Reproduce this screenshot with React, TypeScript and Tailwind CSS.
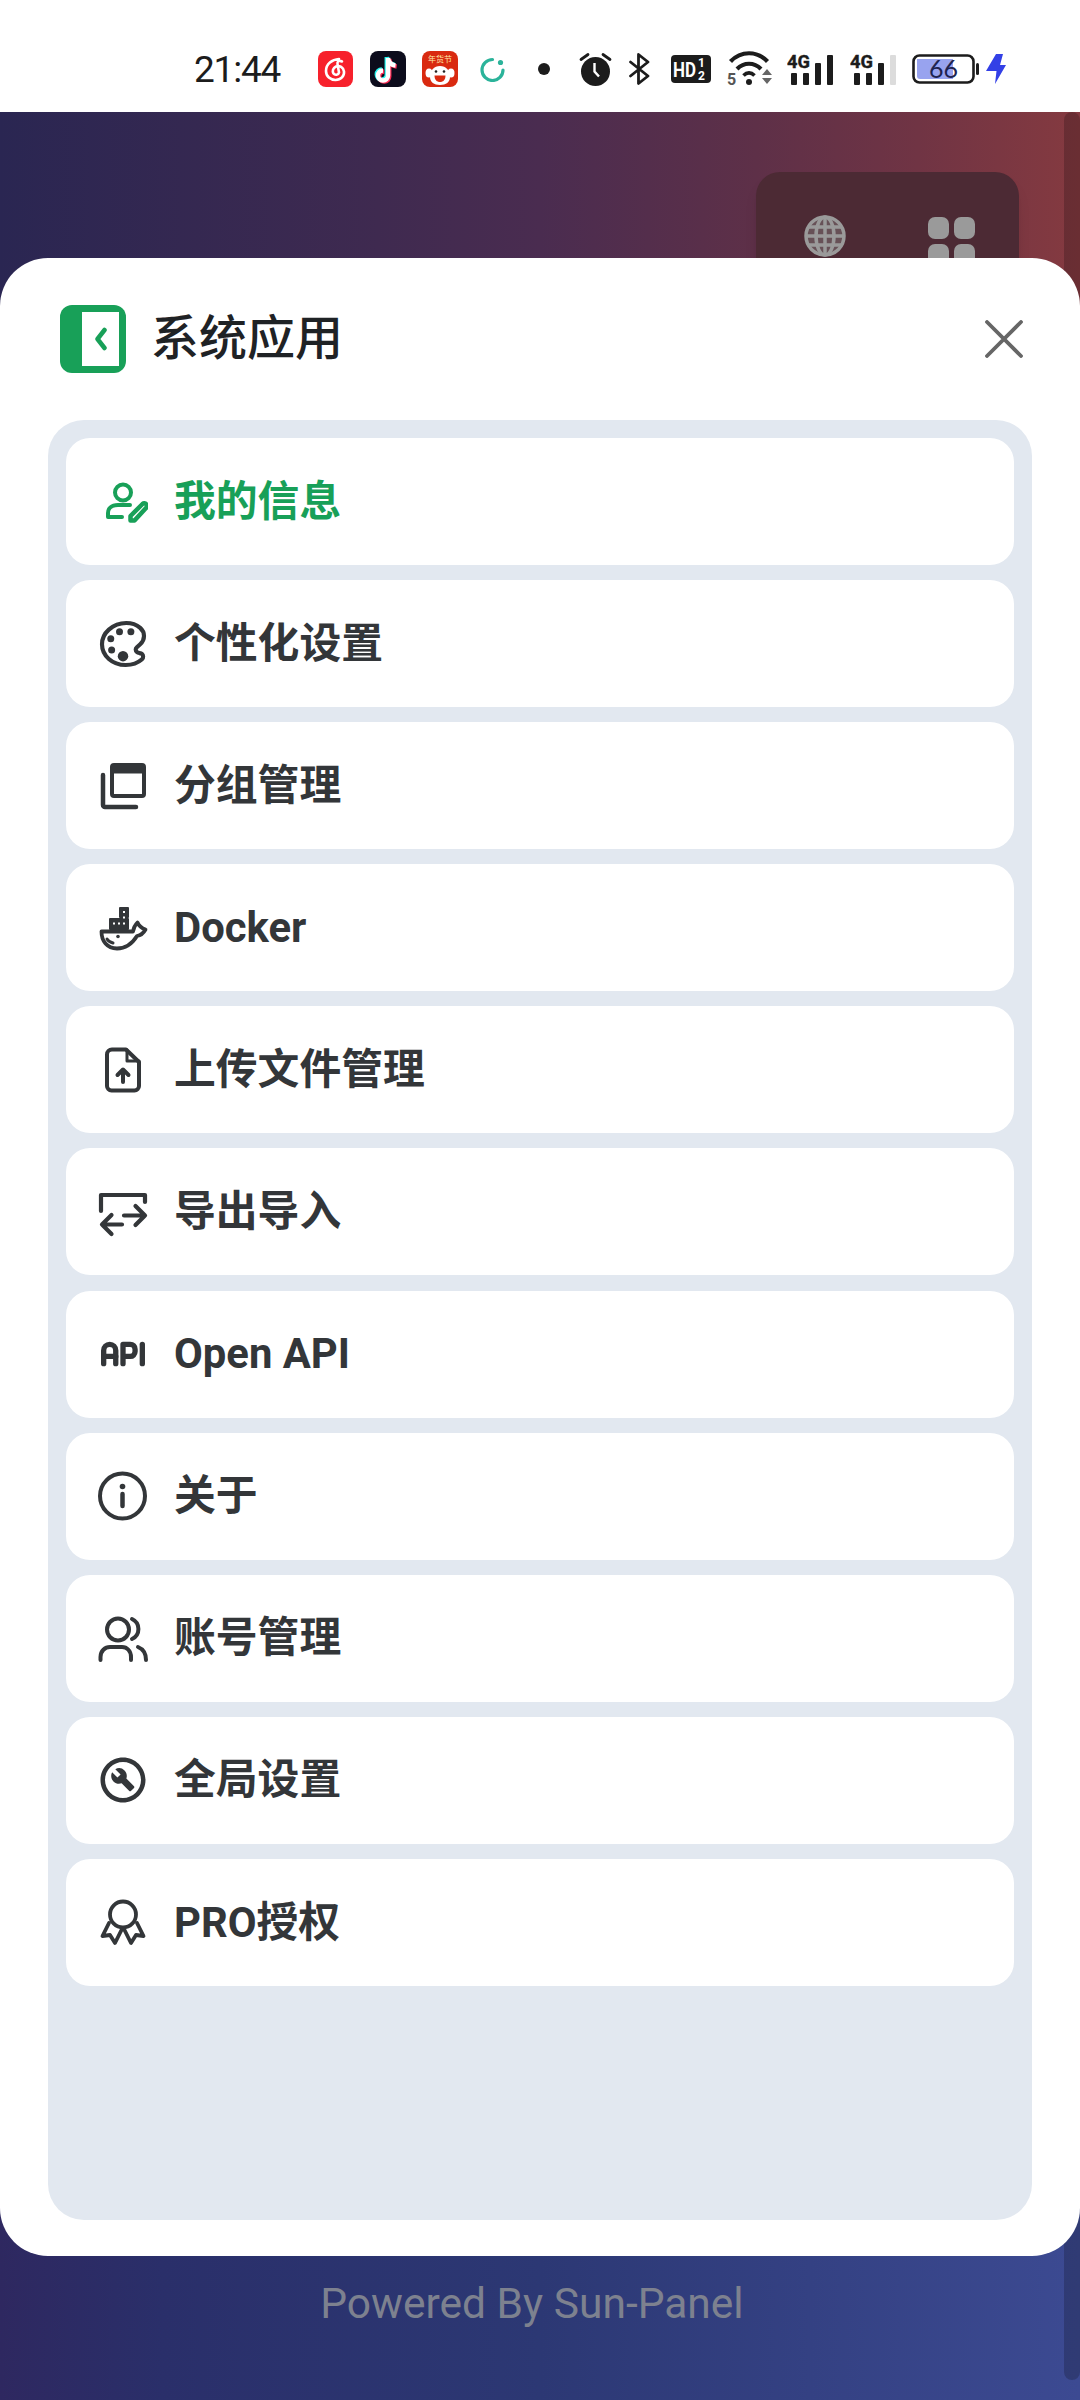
import React from 'react';
import { IoColorPaletteOutline } from 'react-icons/io5';
import { MdOutlineBuildCircle } from 'react-icons/md';
import { TbApi } from 'react-icons/tb';

const UserEditIcon = () => (
  <svg viewBox="0 0 50 50" className="w-[50px] h-[50px]" fill="none" stroke="currentColor" strokeWidth="4" strokeLinecap="round" strokeLinejoin="round">
    <circle cx="25" cy="15.500" r="8" />
    <path d="M32 28H20C13 28 10 32 10 36V40H24" />
    <path d="M32.500 43.500V39L44.500 27A2.600 2.600 0 0 1 48 31L36.500 43.500Z" strokeWidth="4.500" />
  </svg>
);

const CollectionIcon = () => (
  <svg viewBox="0 0 50 50" className="w-[50px] h-[50px]" fill="none" stroke="currentColor" strokeWidth="4" strokeLinecap="round" strokeLinejoin="round">
    <rect x="14" y="4" width="32" height="31" rx="2" />
    <path d="M14 8H46" strokeWidth="9" strokeLinecap="butt" />
    <path d="M5 14V44A2 2 0 0 0 7 46H38" strokeWidth="4.500" />
  </svg>
);

const DockerIcon = () => (
  <svg viewBox="0 0 50 50" className="w-[50px] h-[50px]" fill="none" stroke="currentColor" strokeWidth="3.800" strokeLinecap="round" strokeLinejoin="round">
    <path d="M3.500 28.500H35C35.500 25 37 22 39.500 19.500C41 23 43 25 47.500 26.500C45 31 42 32.500 39 33C34 41 27 45.500 19 45.500C9 45.500 3.500 38 3.500 28.500Z" />
    <path d="M9 36C10.500 38.500 12.500 39.500 15 40" strokeWidth="3" />
    <circle cx="20" cy="33.500" r="1.800" fill="currentColor" stroke="none" />
    <g stroke="none">
      <rect x="21" y="4" width="10" height="11" rx="1" fill="currentColor" />
      <rect x="11" y="15" width="20" height="12" rx="1" fill="currentColor" />
      <g fill="#fff">
        <rect x="25" y="8" width="2" height="2" />
        <rect x="25" y="13.500" width="2" height="2" />
        <rect x="15" y="19.500" width="2" height="2" />
        <rect x="20" y="19.500" width="2" height="2" />
        <rect x="25" y="19.500" width="2" height="2" />
      </g>
    </g>
  </svg>
);

const FileUploadIcon = () => (
  <svg viewBox="0 0 50 50" className="w-[50px] h-[50px]" fill="none" stroke="currentColor" strokeWidth="4" strokeLinecap="round" strokeLinejoin="round">
    <path d="M14 4.500H28L41 17V41A4.500 4.500 0 0 1 36.500 45.500H13.500A4.500 4.500 0 0 1 9 41V9.500A5 5 0 0 1 14 4.500Z" />
    <path d="M29 5V16H41" strokeWidth="3" />
    <path d="M25 37V25M19.500 30L25 24.500L30.500 30" />
  </svg>
);

const ExportIcon = () => (
  <svg viewBox="0 0 50 50" className="w-[50px] h-[50px]" fill="none" stroke="currentColor" strokeWidth="4.200" strokeLinecap="round" strokeLinejoin="round">
    <path d="M3 24V8H47V15" />
    <path d="M26 28.500H47M37.500 19L47 28.500L37.500 38" />
    <path d="M24 37.500H4M13.500 28L4 37.500L13.500 47" />
  </svg>
);

const InfoIcon = () => (
  <svg viewBox="0 0 50 50" className="w-[50px] h-[50px]" fill="none" stroke="currentColor" strokeWidth="4" strokeLinecap="round">
    <circle cx="24.500" cy="25" r="22.500" />
    <circle cx="24.500" cy="15.500" r="2.800" fill="currentColor" stroke="none" />
    <path d="M24.500 23V35" strokeWidth="4.500" />
  </svg>
);

const UsersIcon = () => (
  <svg viewBox="0 0 50 50" className="w-[50px] h-[50px]" fill="none" stroke="currentColor" strokeWidth="4" strokeLinecap="round" strokeLinejoin="round">
    <circle cx="20" cy="16.500" r="11" />
    <path d="M34 6A11 11 0 0 1 34 26" />
    <path d="M2.500 47V44C2.500 38 7 34 12 34H24C29 34 33 38 33 44V47" />
    <path d="M40 34C45 36 48 40 48 47" />
  </svg>
);

const RibbonIcon = () => (
  <svg viewBox="0 0 50 50" className="w-[50px] h-[50px]" fill="none" stroke="currentColor" strokeWidth="3.800" strokeLinecap="round" strokeLinejoin="round">
    <circle cx="25" cy="17.500" r="13" />
    <path d="M11 26L4.500 39L12 38L17 46L24 32" />
    <path d="M39 26L45.500 39L38 38L33 46L26 32" />
  </svg>
);

const GlobeIcon = () => (
  <svg viewBox="0 0 42 42" className="w-[42px] h-[42px]" fill="none" stroke="#9a9a9a" strokeWidth="3.500">
    <circle cx="21" cy="21" r="19" fill="#9a9a9a" fillOpacity="0.35" />
    <ellipse cx="21" cy="21" rx="9" ry="19" />
    <path d="M21 2V40M2 21H40M5 12H37M5 30H37" />
  </svg>
);

const NeteaseIcon = () => (
  <svg viewBox="0 0 35 36" className="w-[35px] h-[36px]">
    <rect width="35" height="36" rx="8" fill="#f7212c" />
    <path d="M21 8C14 8.500 8 13 8 20C8 25.500 12.500 29 17.500 29C23 29 26.500 25 26 20.500C25.500 16.500 21.500 14 18 15.500C15 17 14 20 15.500 22.500C17 24.500 20.500 24 21 21.500L19.500 13C19 10.500 21 9 24 10.500" fill="none" stroke="#fff" strokeWidth="2.600" strokeLinecap="round" />
  </svg>
);

const DouyinIcon = () => {
  const note = 'M18 7V24.500A5 5 0 1 1 13 19.500M18 7C18.500 11.500 21.500 14 25.500 14.500';
  return (
    <svg viewBox="0 0 36 36" className="w-[36px] h-[36px]">
      <rect width="36" height="36" rx="8" fill="#0c0c1c" />
      <g fill="none" strokeWidth="4.500">
        <path d={note} stroke="#25f4ee" transform="translate(-1.200 -1)" />
        <path d={note} stroke="#fe2c55" transform="translate(1.200 1)" />
        <path d={note} stroke="#fff" />
      </g>
    </svg>
  );
};

const JdIcon = () => (
  <svg viewBox="0 0 36 36" className="w-[36px] h-[36px]">
    <rect width="36" height="36" rx="8" fill="#d92a10" />
    <text x="18" y="11" textAnchor="middle" fontSize="8" fill="#ffe9a8" fontFamily="'Noto Sans CJK SC', sans-serif">年货节</text>
    <path d="M8 26C8 19 12 15 18 15C24 15 28 19 28 26C28 31 24 34 18 34C12 34 8 31 8 26Z" fill="#fff" />
    <ellipse cx="7" cy="22" rx="3.500" ry="4.500" fill="#fff" />
    <ellipse cx="29" cy="22" rx="3.500" ry="4.500" fill="#fff" />
    <circle cx="14" cy="20.500" r="1.300" fill="#222" />
    <circle cx="22" cy="20.500" r="1.300" fill="#222" />
    <path d="M12.500 24.500H23.500C23.500 29 21 31 18 31C15 31 12.500 29 12.500 24.500Z" fill="#d92a10" />
  </svg>
);

const SpinnerIcon = () => (
  <svg viewBox="0 0 25 25" className="w-[25px] h-[25px]" fill="none">
    <path d="M12.500 2.500A10.500 10.500 0 1 0 23 13" stroke="#2bb39a" strokeWidth="3.200" strokeLinecap="round" />
    <circle cx="20.500" cy="5.500" r="2.600" fill="#2bb39a" />
  </svg>
);

const AlarmIcon = () => (
  <svg viewBox="0 0 33 34" className="w-[33px] h-[34px]">
    <circle cx="16.500" cy="19.500" r="14.500" fill="#1c1c1c" />
    <path d="M2 7.500L9 2.500M31 7.500L24 2.500" stroke="#1c1c1c" strokeWidth="2.800" strokeLinecap="round" />
    <path d="M15.500 11V19.500L20 24.500" fill="none" stroke="#fff" strokeWidth="2.400" />
  </svg>
);

const BluetoothIcon = () => (
  <svg viewBox="0 0 21 32" className="w-[21px] h-[32px]">
    <path d="M1.500 9L19 23L9.500 30.500V1.500L19 9L1.500 23" fill="none" stroke="#1c1c1c" strokeWidth="2.800" strokeLinejoin="round" strokeLinecap="round" />
  </svg>
);

const HdIcon = () => (
  <svg viewBox="0 0 40 28" className="w-[40px] h-[28px]">
    <rect width="40" height="28" rx="4" fill="#1c1c1c" />
    <text x="2" y="21.500" fontSize="21" fontWeight="700" fill="#fff" fontFamily="Roboto, sans-serif" textLength="23" lengthAdjust="spacingAndGlyphs">HD</text>
    <text x="27" y="12" fontSize="12" fontWeight="700" fill="#fff" fontFamily="Roboto, sans-serif">1</text>
    <text x="27" y="25" fontSize="12" fontWeight="700" fill="#fff" fontFamily="Roboto, sans-serif">2</text>
  </svg>
);

const WifiIcon = () => (
  <svg viewBox="0 -2 46 40" className="w-[46px] h-[40px]" fill="none" stroke="#1c1c1c" strokeWidth="4.200">
    <path d="M3.500 10.500C14 -0.500 30 -0.500 40.500 10.500" />
    <path d="M10 18C17 11 27 11 34 18" />
    <circle cx="22" cy="31" r="3" fill="#1c1c1c" stroke="none" />
    <path d="M16.500 24.500C20 21 24 21 27.500 24.500" strokeWidth="3.600" />
    <text x="0" y="34" fontSize="16" fontWeight="700" fill="#555" stroke="none" fontFamily="Roboto, sans-serif">5</text>
    <path d="M35 24H45L40 18ZM35 27H45L40 33Z" fill="#666" stroke="none" />
  </svg>
);

const SignalIcon = ({ last = false }: { last?: boolean }) => (
  <svg viewBox="0 -4 46 40" className="w-[46px] h-[40px]">
    <text x="0" y="14.500" fontSize="19" fontWeight="700" fill="#1c1c1c" stroke="#1c1c1c" strokeWidth="0.400" fontFamily="Roboto, sans-serif" textLength="23" lengthAdjust="spacingAndGlyphs">4G</text>
    <rect x="4" y="20" width="6" height="12" rx="1" fill="#1c1c1c" />
    <rect x="16" y="20" width="6" height="12" rx="1" fill="#1c1c1c" />
    <rect x="28" y="10" width="6" height="22" rx="1" fill="#1c1c1c" />
    <rect x="40" y="2" width="6" height="30" rx="1" fill={last ? '#dcdcdc' : '#1c1c1c'} />
  </svg>
);

const BatteryIcon = () => (
  <svg viewBox="0 0 67 30" className="w-[67px] h-[30px]">
    <rect x="1.500" y="1.500" width="60" height="27" rx="6" fill="none" stroke="#1c1c1c" strokeWidth="2.600" />
    <path d="M5 5H41V25H8A3 3 0 0 1 5 22Z" fill="#98a3ef" />
    <rect x="64" y="9" width="3" height="12" rx="1.500" fill="#1c1c1c" />
    <text x="17" y="24" fontSize="25" fill="#1e2350" fontFamily="Lato, Roboto, sans-serif">66</text>
  </svg>
);

const BoltIcon = () => (
  <svg viewBox="0 0 20 30" className="w-[20px] h-[30px]">
    <path d="M10 0H17L14 11H20L9 30L10.500 17H0Z" fill="#3340e6" />
  </svg>
);

const menuItems = [
  { label: '我的信息', icon: <UserEditIcon />, active: true },
  { label: '个性化设置', icon: <IoColorPaletteOutline className="w-[56px] h-[56px] shrink-0 [&_path]:[stroke-width:38]" /> },
  { label: '分组管理', icon: <CollectionIcon /> },
  { label: 'Docker', icon: <DockerIcon /> },
  { label: '上传文件管理', icon: <FileUploadIcon /> },
  { label: '导出导入', icon: <ExportIcon /> },
  { label: 'Open API', icon: <TbApi className="w-[58px] h-[58px] shrink-0" strokeWidth={2.2} /> },
  { label: '关于', icon: <InfoIcon /> },
  { label: '账号管理', icon: <UsersIcon /> },
  { label: '全局设置', icon: <MdOutlineBuildCircle className="w-[54px] h-[54px] shrink-0" /> },
  { label: 'PRO授权', icon: <RibbonIcon /> },
];

export default function App() {
  return (
    <div className="w-[1080px] h-[2400px] flex flex-col overflow-hidden font-['Roboto','Noto_Sans_CJK_SC',sans-serif]">
      {/* Status bar */}
      <div className="h-[112px] pt-[26px] pl-[194px] bg-white flex items-center text-[#1c1c1c]">
        <span className="w-[86px] text-[37px] leading-none tracking-[-1.2px]">21:44</span>
        <div className="ml-[38px] flex"><NeteaseIcon /></div>
        <div className="ml-[17px] flex"><DouyinIcon /></div>
        <div className="ml-[16px] flex"><JdIcon /></div>
        <div className="ml-[22px] flex"><SpinnerIcon /></div>
        <div className="ml-[33px] w-[12px] h-[12px] rounded-full bg-[#1c1c1c]" />
        <div className="ml-[29px] flex"><AlarmIcon /></div>
        <div className="ml-[17px] flex"><BluetoothIcon /></div>
        <div className="ml-[21px] flex"><HdIcon /></div>
        <div className="ml-[16px] flex"><WifiIcon /></div>
        <div className="ml-[14px] flex"><SignalIcon /></div>
        <div className="ml-[17px] flex"><SignalIcon last /></div>
        <div className="ml-[16px] flex"><BatteryIcon /></div>
        <div className="ml-[7px] flex"><BoltIcon /></div>
      </div>

      {/* Page behind the sheet */}
      <div className="relative flex-1 pt-[146px] flex flex-col bg-no-repeat bg-[size:100%_210px,100%_100%] bg-[linear-gradient(90deg,#2a2652_0%,#3f2a50_35%,#4a2c50_50%,#5e3048_70%,#703444_85%,#853a40_100%),linear-gradient(90deg,#2e2860_0%,#2a2f6a_15%,#2c3874_50%,#3c4a92_100%)]">
        <div className="absolute top-0 bottom-[20px] right-0 w-[16px] rounded-full bg-black/20" />
        <div className="absolute left-[756px] top-[60px] w-[263px] h-[200px] rounded-[24px] bg-[#4c2a34] shadow-lg flex">
          <div className="w-[138px] pt-[43px] flex justify-center items-start">
            <GlobeIcon />
          </div>
          <div className="pt-[45px] pl-[34px]">
            <div className="grid grid-cols-2 gap-[5px]">
              <div className="w-[21px] h-[22px] rounded-[7px] bg-[#9a9a9a]" />
              <div className="w-[21px] h-[22px] rounded-[7px] bg-[#9a9a9a]" />
              <div className="w-[21px] h-[22px] rounded-[7px] bg-[#9a9a9a]" />
              <div className="w-[21px] h-[22px] rounded-[7px] bg-[#9a9a9a]" />
            </div>
          </div>
        </div>

        {/* Sheet */}
        <div className="relative h-[1998px] px-[48px] pb-[36px] bg-white rounded-[48px] flex flex-col">
          <div className="h-[162px] shrink-0 pl-[12px] pr-[9px] flex items-center">
            <div className="w-[66px] h-[68px] pl-[22px] pr-[7px] py-[7px] rounded-[12px] bg-[#18a058] flex">
              <div className="flex-1 bg-white flex items-center justify-center">
                <svg viewBox="0 0 14 24" className="w-[14px] h-[24px]">
                  <path d="M10.500 3L3.500 12L10.500 21" fill="none" stroke="#18a058" strokeWidth="4.500" strokeLinecap="round" strokeLinejoin="round" />
                </svg>
              </div>
            </div>
            <span className="ml-[25px] text-[48px] leading-none font-medium text-[#1f2225]">系统应用</span>
            <svg viewBox="0 0 38 38" className="ml-auto w-[38px] h-[38px]">
              <path d="M2 2L36 36M36 2L2 36" stroke="#666" strokeWidth="3.800" strokeLinecap="round" />
            </svg>
          </div>

          <div className="flex-1 p-[18px] rounded-[36px] bg-[#e2e8f0] flex flex-col gap-[15.100px]">
            {menuItems.map((item) => (
              <div
                key={item.label}
                className={`h-[127px] shrink-0 pl-[32px] rounded-[24px] bg-white flex items-center ${item.active ? 'text-[#18a058]' : 'text-[#333639]'}`}
              >
                <div className="w-[50px] h-[50px] shrink-0 flex items-center justify-center">{item.icon}</div>
                <span className="ml-[26px] text-[41.800px] leading-none font-bold">{item.label}</span>
              </div>
            ))}
          </div>
        </div>

        <div className="relative w-[1064px] pt-[20px] text-center text-[42.500px] leading-[56px] text-[#7d818f]">Powered By Sun-Panel</div>
      </div>
    </div>
  );
}
